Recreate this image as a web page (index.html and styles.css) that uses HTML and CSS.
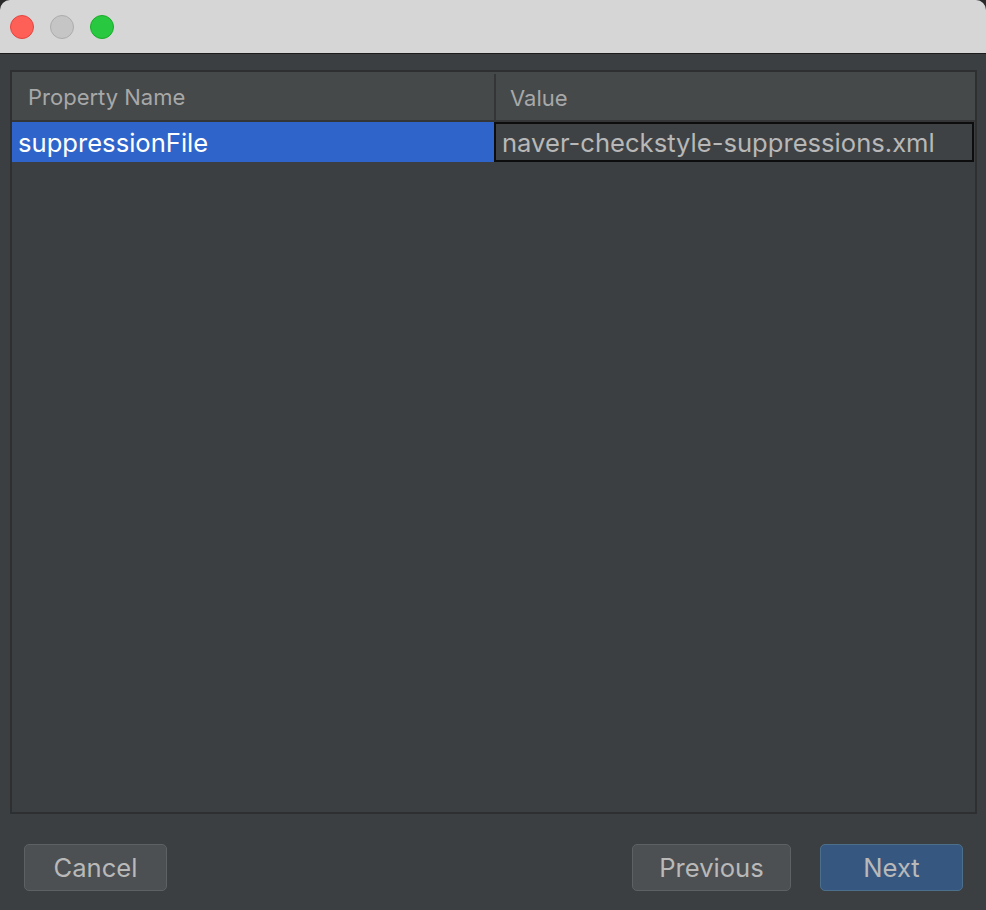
FILE: index.html
```html
<!DOCTYPE html>
<html>
<head>
<meta charset="utf-8">
<link rel="stylesheet" href="styles.css">
</head>
<body>
<div class="window">
  <div class="titlebar">
    <span class="light red"></span>
    <span class="light gray"></span>
    <span class="light green"></span>
  </div>
  <div class="content">
    <div class="table">
      <div class="thead">
        <div class="th th-name">Property Name</div>
        <div class="th th-value">Value</div>
      </div>
      <div class="row">
        <div class="cell cell-name">suppressionFile</div>
        <div class="cell cell-value">naver-checkstyle-suppressions.xml</div>
      </div>
    </div>
    <div class="footer">
      <button class="btn">Cancel</button>
      <div class="spacer"></div>
      <button class="btn btn-prev">Previous</button>
      <button class="btn btn-primary">Next</button>
    </div>
  </div>
</div>
</body>
</html>
```
FILE: styles.css
```css
html, body {
  margin: 0;
  padding: 0;
  background: #2a2a2a;
}
body {
  width: 986px;
  height: 910px;
  overflow: hidden;
  font-family: Inter, "Liberation Sans", sans-serif;
}
.window {
  width: 986px;
  height: 910px;
  background: #3c3f41;
  border-radius: 10px 10px 0 0;
  overflow: hidden;
  display: flex;
  flex-direction: column;
}
.titlebar {
  height: 53px;
  flex: none;
  background: #d7d6d7;
  border-bottom: 1px solid #1c1c1c;
  display: flex;
  align-items: center;
  gap: 16px;
  padding-left: 10px;
  box-sizing: content-box;
}
.light {
  width: 24px;
  height: 24px;
  border-radius: 50%;
  box-sizing: border-box;
}
.red { background: #fe5f57; border: 1px solid #e2463f; }
.gray { background: #c6c5c6; border: 1px solid #adacad; }
.green { background: #28c840; border: 1px solid #1aab29; }
.content {
  flex: 1;
  display: flex;
  flex-direction: column;
  padding: 16px 9px 19px 10px;
}
.table {
  flex: 1;
  border: 2px solid #2d2f30;
  background: #3c3f41;
  display: flex;
  flex-direction: column;
}
.thead {
  height: 48px;
  background: #45494a;
  border-bottom: 2px solid #333537;
  display: flex;
}
.th {
  font-size: 22px;
  color: #a8a8a8;
  display: flex;
  align-items: center;
  padding-left: 16px;
  box-sizing: border-box;
  padding-top: 2px;
}
.th-name { width: 482px; }
.th-value {
  flex: 1;
  border-left: 2px solid #333537;
  margin-top: 2px;
  padding-left: 14px;
}
.row {
  height: 40px;
  display: flex;
}
.cell {
  font-size: 25.6px;
  display: flex;
  align-items: center;
  box-sizing: border-box;
}
.cell-name {
  width: 482px;
  background: #2f65ca;
  color: #ffffff;
  padding-left: 6px;
}
.cell-value {
  flex: 1;
  border: 2px solid #0d0d0d;
  background: #3f4244;
  color: #b8b8b8;
  padding-left: 6px;
  margin-right: 1px;
}
.footer {
  display: flex;
  margin-top: 30px;
  padding: 0 14px;
  gap: 29px;
}
.spacer { flex: 1; }
.btn {
  height: 47px;
  width: 143px;
  border-radius: 5px;
  border: 1px solid #5e6162;
  background: #4c5052;
  color: #b9b9b9;
  font-family: Inter, "Liberation Sans", sans-serif;
  font-size: 25.6px;
  padding: 0;
}
.btn-prev { width: 159px; }
.btn-primary {
  background: #365880;
  border-color: #4c708c;
}
```
